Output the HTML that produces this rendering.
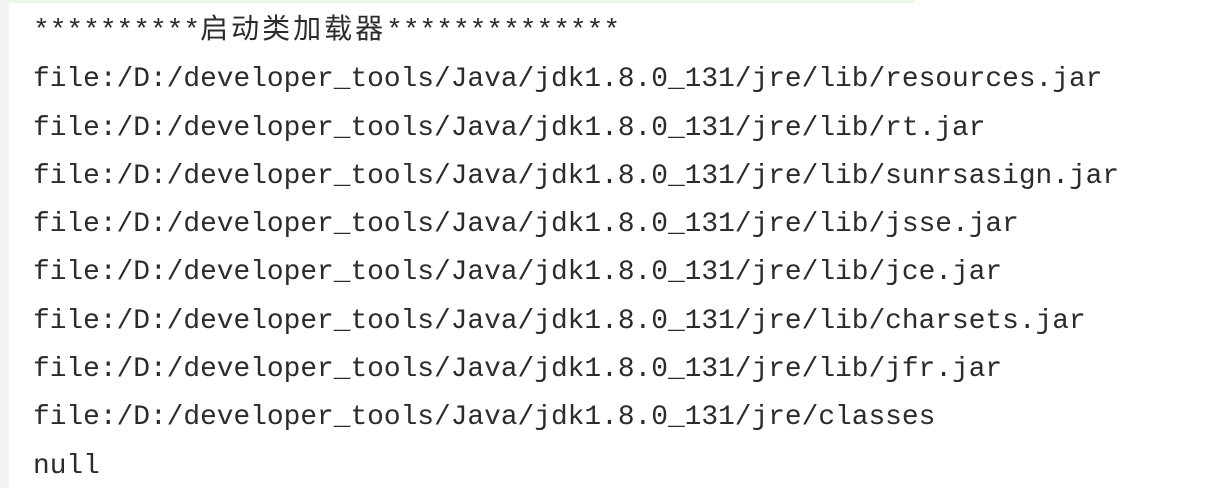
<!DOCTYPE html>
<html><head><meta charset="utf-8"><style>
html,body{margin:0;padding:0;background:#fff;width:1232px;height:488px;overflow:hidden;}
.strip{position:absolute;left:0;top:0;width:9px;height:488px;background:#f3f3f3;}
.topline{position:absolute;left:9px;top:0;width:906px;height:3px;background:#eef5ea;}
.c{position:absolute;left:33px;top:3px;font-family:"Liberation Mono","Noto Sans CJK SC",monospace;font-size:27.85px;line-height:48.3px;color:#2b2b2b;white-space:pre;}
.cjk{font-family:"Noto Sans CJK SC",sans-serif;font-size:28px;letter-spacing:3px;}
</style></head><body>
<div class="strip"></div><div class="topline"></div>
<div class="c">**********<span class="cjk">启动类加载器</span>**************
file:/D:/developer_tools/Java/jdk1.8.0_131/jre/lib/resources.jar
file:/D:/developer_tools/Java/jdk1.8.0_131/jre/lib/rt.jar
file:/D:/developer_tools/Java/jdk1.8.0_131/jre/lib/sunrsasign.jar
file:/D:/developer_tools/Java/jdk1.8.0_131/jre/lib/jsse.jar
file:/D:/developer_tools/Java/jdk1.8.0_131/jre/lib/jce.jar
file:/D:/developer_tools/Java/jdk1.8.0_131/jre/lib/charsets.jar
file:/D:/developer_tools/Java/jdk1.8.0_131/jre/lib/jfr.jar
file:/D:/developer_tools/Java/jdk1.8.0_131/jre/classes
null</div>
</body></html>
